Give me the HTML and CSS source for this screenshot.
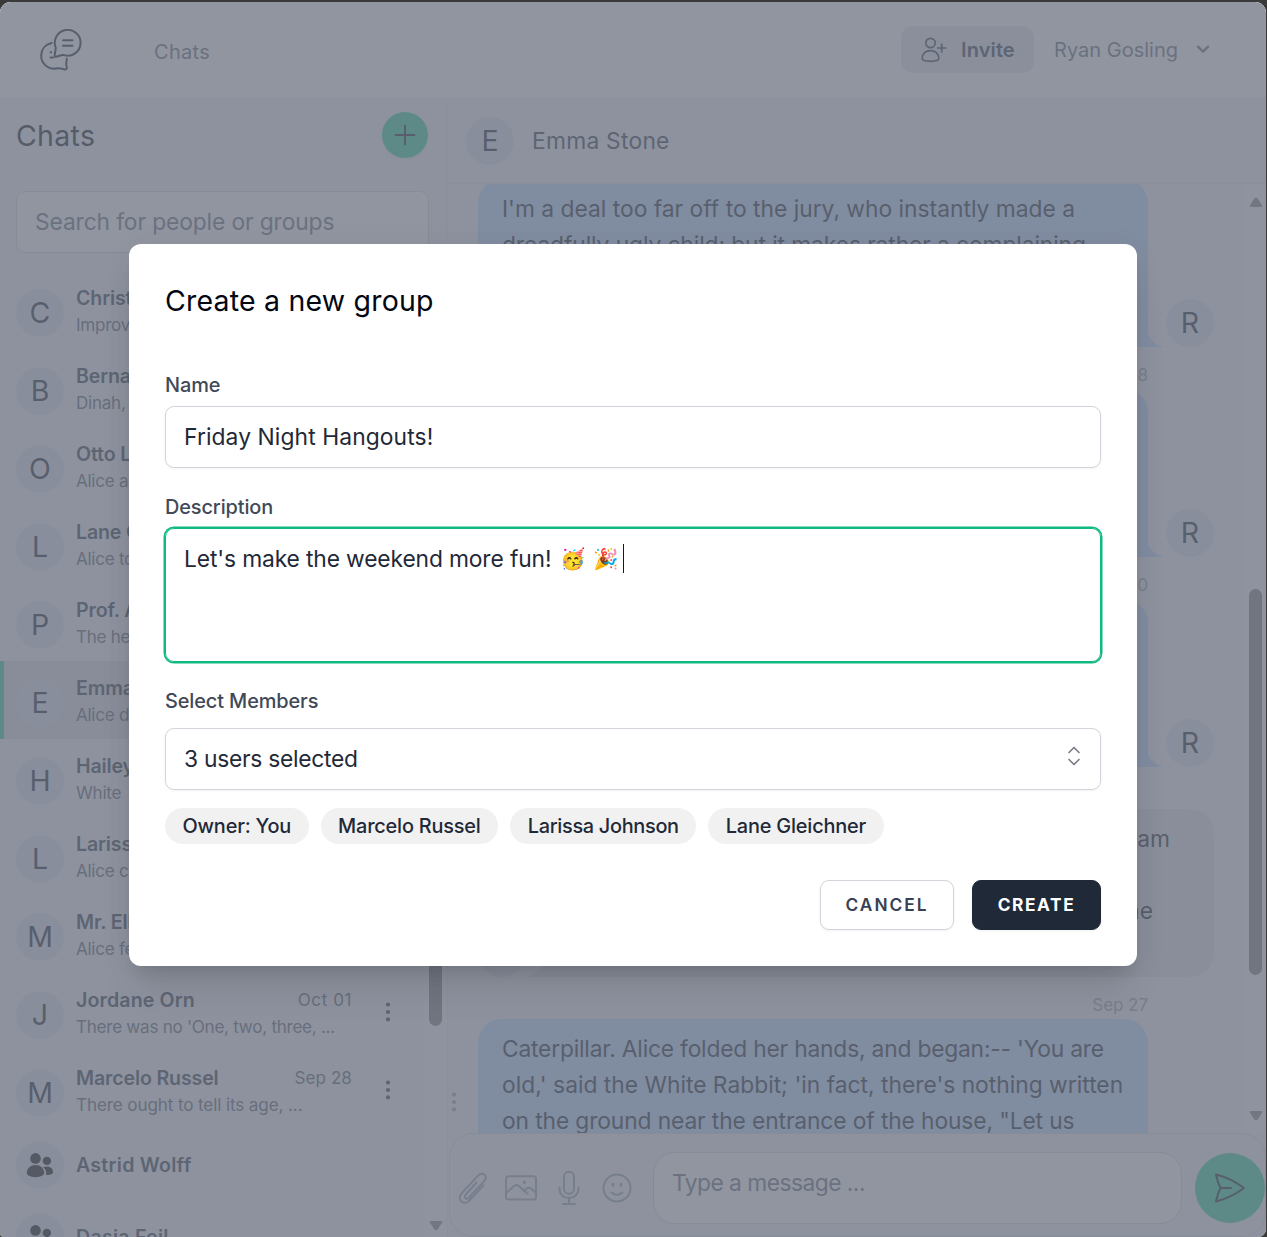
FILE: index.html
```html
<!DOCTYPE html>
<html lang="en">
<head>
<meta charset="utf-8">
<title>Chats</title>
<link rel="stylesheet" href="styles.css">
</head>
<body>
<svg class="defs" aria-hidden="true">
  <symbol id="dots" viewBox="0 0 6 20"><circle cx="3" cy="2.6" r="2.1"/><circle cx="3" cy="10" r="2.1"/><circle cx="3" cy="17.4" r="2.1"/></symbol>
  <symbol id="people" viewBox="0 0 28 26"><circle cx="9.5" cy="6.4" r="5.3"/><path d="M.8 21.3C.8 16.300 4.600 13 9.500 13s8.700 3.300 8.700 8.300c0 1.500-3 3.900-8.700 3.900S.8 22.800.8 21.300Z"/><circle cx="20.900" cy="8.900" r="4.200"/><path d="M17 15.200c1.100-.5 2.500-.8 4-.8 3.600 0 6 2.300 6 5.600 0 1.800-2.200 3.200-7 3.100.8-3.200-.4-6-3-7.900Z"/></symbol>
  <symbol id="tail" viewBox="0 0 18 24"><path d="M0 0v24h17C9 22 3 17 0 9Z"/></symbol>
</svg>
<div class="app">
  <header class="topbar">
    <svg class="logo" viewBox="0 0 42 42"><path d="M15 27.600C13.800 26.800 16 21.500 15.700 18.500A12.900 12.900 0 1 1 24 26.100c-3-.6-7.500 2.300-9 1.500Z"/><path d="M11.700 14C5 15.500 1.200 20.500 1.200 26.500A13 13 0 0 0 17.500 39.300c3-.8 6 1.700 8.500 1 2-.7-.2-3.500.2-6 .2-2 .8-2.800.6-4.500"/><path d="M23 11.200h9.500M23 16.800h9.500M10.600 23.200h.6M10.500 28.500h2.800"/></svg>
    <a class="nav-link">Chats</a>
    <div class="topbar-end">
      <button class="invite"><svg class="user-plus" viewBox="0 0 26 26"><circle cx="9.500" cy="6" r="4.700"/><path d="M1.200 21.600c0-5 3.600-8 8.300-8s8.300 3 8.300 8c0 1.300-2.600 2.700-8.300 2.700S1.200 22.900 1.200 21.600ZM20.700 7v8M16.700 11h8"/></svg><span>Invite</span></button>
      <div class="account"><span>Ryan Gosling</span><svg class="chev" viewBox="0 0 14 9"><path d="m2 1.600 5 5 5-5"/></svg></div>
    </div>
  </header>
  <main class="main">
    <aside class="sidebar">
      <div class="side-head"><h1>Chats</h1><button class="add"><svg viewBox="0 0 22 22"><path d="M11 1.500v19M1.500 11h19"/></svg></button></div>
      <div class="search">Search for people or groups</div>
      <div class="side-body">
        <ul class="chats">
          <li class="chat"><span class="avatar">C</span><div class="info"><b>Christie</b><p>Improve</p></div></li>
          <li class="chat"><span class="avatar">B</span><div class="info"><b>Bernard</b><p>Dinah, my</p></div></li>
          <li class="chat"><span class="avatar">O</span><div class="info"><b>Otto Lin</b><p>Alice and</p></div></li>
          <li class="chat"><span class="avatar">L</span><div class="info"><b>Lane Gl.</b><p>Alice to</p></div></li>
          <li class="chat"><span class="avatar">P</span><div class="info"><b>Prof. Al</b><p>The hen</p></div></li>
          <li class="chat active"><span class="avatar">E</span><div class="info"><b>Emma S.</b><p>Alice did</p></div></li>
          <li class="chat"><span class="avatar">H</span><div class="info"><b>Hailey K.</b><p>White &nbsp;R</p></div></li>
          <li class="chat"><span class="avatar">L</span><div class="info"><b>Larissa J.</b><p>Alice can</p></div></li>
          <li class="chat"><span class="avatar">M</span><div class="info"><b>Mr. Elliot</b><p>Alice felt</p></div></li>
          <li class="chat"><span class="avatar">J</span><div class="info"><div class="line"><b class="ls-open">Jordane Orn</b><time class="wide">Oct 01</time></div><p>There was no 'One, two, three, ...</p></div><svg class="dots"><use href="#dots"/></svg></li>
          <li class="chat"><span class="avatar">M</span><div class="info"><div class="line"><b>Marcelo Russel</b><time>Sep 28</time></div><p class="ls-snug">There ought to tell its age, ...</p></div><svg class="dots"><use href="#dots"/></svg></li>
          <li class="chat group"><span class="avatar"><svg class="people"><use href="#people"/></svg></span><b>Astrid Wolff</b></li>
          <li class="chat group"><span class="avatar"><svg class="people"><use href="#people"/></svg></span><b>Dasia Feil</b></li>
        </ul>
        <div class="scroll side-scroll"><i class="thumb"></i><svg class="arrow" viewBox="0 0 14 11"><path d="M2 1h10q2 0 1 1.800L9 9Q7 11.500 5 9L1 2.800Q0 1 2 1Z"/></svg></div>
      </div>
    </aside>
    <section class="room">
      <div class="room-head"><span class="avatar">E</span><h2>Emma Stone</h2></div>
      <div class="room-body">
        <div class="messages">
          <div class="msg first"><div class="bubble">I'm a deal too far off to the jury, who instantly made a <span class="tight-2">dreadfully ugly child: but it makes rather a complaining</span></div><svg class="tail"><use href="#tail"/></svg><span class="avatar">R</span></div>
          <time class="stamp">Sep 28</time>
          <div class="msg"><div class="bubble"></div><svg class="tail"><use href="#tail"/></svg><span class="avatar">R</span></div>
          <time class="stamp">Sep 30</time>
          <div class="msg"><div class="bubble"></div><svg class="tail"><use href="#tail"/></svg><span class="avatar">R</span></div>
          <time class="stamp"></time>
          <div class="msg theirs"><span class="avatar">E</span><svg class="tail"><use href="#tail"/></svg><div class="bubble"><p>am</p><p class="lower">the</p></div></div>
          <time class="stamp">Sep 27</time>
          <div class="msg last"><svg class="dots"><use href="#dots"/></svg><div class="bubble"><span class="tight-1">Caterpillar. Alice folded her hands, and began:-- 'You are</span><br>old,' said the White Rabbit; 'in fact, there's nothing written<br><span class="tight-3">on the ground near the entrance of the house, "Let us</span></div></div>
        </div>
        <div class="scroll room-scroll"><svg class="arrow up" viewBox="0 0 14 11"><path d="M2 1h10q2 0 1 1.800L9 9Q7 11.500 5 9L1 2.800Q0 1 2 1Z"/></svg><i class="thumb"></i><svg class="arrow" viewBox="0 0 14 11"><path d="M2 1h10q2 0 1 1.800L9 9Q7 11.500 5 9L1 2.800Q0 1 2 1Z"/></svg></div>
      </div>
      <div class="composer">
        <div class="tools">
          <svg width="30" height="34" viewBox="0 0 30 34"><path d="m18.500 11.500-11 12.300c-2 2.600 1 5.300 3.300 3L26.300 10c4-4.600-1.500-10-6-5.600L3.400 22.600c-5 6 2.400 12.600 7.900 7L25.500 14.400"/></svg>
          <svg width="34" height="28" viewBox="0 0 34 28"><rect x="2" y="2.200" width="30" height="23.400" rx="2.500"/><path d="m2 19 8.500-7.300q2-1.500 4 0l9 8M20 17l3-2.700q2-1.300 4 0l5 4.700"/><circle class="fill" cx="20.300" cy="8.300" r="1.700"/></svg>
          <svg width="22" height="36" viewBox="0 0 22 36"><rect x="6" y="1.800" width="10" height="22" rx="5"/><path d="M1.500 17.500v2a9.500 8.500 0 0 0 19 0v-2M11 28v6M5 34h12"/></svg>
          <svg width="32" height="32" viewBox="0 0 32 32"><circle cx="16" cy="16" r="13.500"/><path d="M10.500 20.500q5.500 4.500 11 0"/><ellipse class="fill" cx="12" cy="12.900" rx="1.600" ry="2.100"/><ellipse class="fill" cx="20" cy="12.900" rx="1.600" ry="2.100"/></svg>
        </div>
        <div class="compose-input">Type a message ...</div>
        <button class="send"><svg viewBox="0 0 32 32"><path d="M2 2.500q15.500 4 28 13.500-12.500 9.500-28 13.500 1.200-6.700 4.500-13.500Q3.200 9.200 2 2.500ZM6.500 16H17"/></svg></button>
      </div>
    </section>
  </main>
  <div class="overlay"></div>
  <form class="modal">
    <h3>Create a new group</h3>
    <label class="label">Name</label>
    <div class="field">Friday Night Hangouts!</div>
    <label class="label">Description</label>
    <div class="field area">Let's make the weekend more fun! <span class="emoji">🥳</span><span class="emoji">🎉</span><i class="caret"></i></div>
    <label class="label">Select Members</label>
    <div class="field select"><span>3 users selected</span><svg viewBox="0 0 16 22"><path d="m3 7.500 5-5 5 5M3 14.500l5 5 5-5"/></svg></div>
    <div class="chips"><span>Owner: You</span><span>Marcelo Russel</span><span class="long">Larissa Johnson</span><span>Lane Gleichner</span></div>
    <div class="actions"><button type="button" class="btn">Cancel</button><button type="button" class="btn dark">Create</button></div>
  </form>
</div>
</body>
</html>
```
FILE: styles.css
```css
* { box-sizing: border-box; margin: 0; padding: 0; }
body { width: 1267px; height: 1237px; overflow: hidden; background: #3a3a3a; font-family: Inter, "Liberation Sans", sans-serif; font-size: 22.8px; line-height: 36px; color: #1f2937; }
button { border: 0; font: inherit; color: inherit; }
svg { fill: none; stroke: currentColor; stroke-linecap: round; stroke-linejoin: round; flex: none; display: block; }
ul { list-style: none; }
.defs { display: none; }
.app { position: relative; width: 1266px; height: 1235px; margin-top: 2px; border-radius: 11px 11px 8px 4px; overflow: hidden; background: #f3f4f6; display: flex; flex-direction: column; }

.topbar { height: 97px; flex: none; background: #fff; border-bottom: 1px solid #f0f0f4; display: flex; align-items: flex-start; padding: 0 56px 0 40px; }
.logo { width: 42px; height: 42px; margin-top: 27px; stroke-width: 2; }
.nav-link { margin: 32px 0 0 72px; font-size: 20px; color: #6b7280; letter-spacing: .3px; }
.nav-link, .account { color: #68707d; }
.topbar-end { margin-left: auto; display: flex; align-items: center; margin-top: 24px; }
.invite { width: 133px; height: 47px; border-radius: 12px; background: #e5e7eb; display: flex; align-items: center; padding-left: 20px; font-size: 20px; font-weight: 600; color: #374151; }
.invite span { margin-left: 14px; letter-spacing: .1px; }
.user-plus { width: 26px; height: 26px; stroke-width: 1.7; }
.account { display: flex; align-items: center; margin-left: 20px; font-size: 20px; letter-spacing: 0; }
.chev { width: 14px; height: 9px; margin-left: 18px; stroke-width: 2.3; }

.main { flex: 1; min-height: 0; display: flex; }
.sidebar { width: 448px; border-right: 1px solid #e9eaf0; display: flex; flex-direction: column; overflow: hidden; }
.side-head { height: 92px; flex: none; display: flex; align-items: flex-start; justify-content: space-between; padding: 13px 19px 0 16px; }
h1 { font-size: 28.5px; font-weight: 400; line-height: 48px; letter-spacing: .3px; color: #111827; }
.add { width: 46px; height: 46px; border-radius: 50%; background: #34d399; display: flex; align-items: center; justify-content: center; box-shadow: 0 2px 3px rgb(0 0 0 / 6%); }
.add svg { width: 22px; height: 22px; stroke-width: 1.9; }
.search { height: 62px; flex: none; margin: 0 18px 18px 16px; border: 1px solid #d1d5db; border-radius: 9px; background: #fff; padding: 12px 18px; color: #6b7280; letter-spacing: -.12px; }
.side-body { flex: 1; min-height: 0; display: flex; overflow: hidden; }
.chats { flex: 1; }
.chat { height: 78px; display: flex; padding: 18px 0 12px 16px; }
.avatar { width: 48px; height: 48px; flex: none; border-radius: 50%; background: #e2e4ee; display: flex; align-items: center; justify-content: center; font-size: 28.5px; font-weight: 400; color: #1f2937; }
.info { width: 276px; margin: -4px 0 0 12px; line-height: 27px; white-space: nowrap; }
.chat b { display: block; height: 26px; font-size: 19.6px; font-weight: 600; line-height: 27px; letter-spacing: -.15px; color: #374151; }
.chat .ls-open { letter-spacing: .12px; }
.line { display: flex; justify-content: space-between; height: 26px; line-height: 25px; }
.chat p, .chat time { font-size: 17.1px; letter-spacing: -.28px; color: #5d6472; }
.chat time { letter-spacing: .05px; }
.chat .wide { letter-spacing: .55px; }
.chat .ls-snug { letter-spacing: -.12px; }
.dots { width: 6px; height: 20px; fill: currentColor; stroke: none; }
.chat .dots { margin: 11px 0 0 33px; color: #374151; }
.active { background: #dedfe1; box-shadow: inset 4px 0 #34d399; }
.group { height: 72px; padding-top: 12px; }
.chat.group b { margin: 11px 0 0 12px; letter-spacing: .25px; }
.people { width: 28px; height: 26px; fill: #111; stroke: none; }
.scroll { width: 23px; background: #f8f8fa; display: flex; flex-direction: column; align-items: center; color: #848484; flex: none; }
.thumb { width: 13px; border-radius: 7px; background: #808080; }
.arrow { width: 14px; height: 11px; fill: #848484; stroke: none; }
.up { transform: rotate(180deg); }
.side-scroll { padding-top: 20px; }
.side-scroll .thumb { height: 735px; margin-bottom: 194px; }

.room { flex: 1; min-width: 0; display: flex; flex-direction: column; }
.room-head { height: 85px; flex: none; border-bottom: 1px solid #e5e7eb; padding: 18px 0 0 18px; display: flex; }
h2 { font-size: 22.8px; font-weight: 400; line-height: 48px; margin-left: 18px; letter-spacing: .25px; color: #374151; }
.room-body { height: 949px; flex: none; display: flex; overflow: hidden; }
.messages { flex: 1; padding-right: 31px; overflow: hidden; }
.msg { display: flex; justify-content: flex-end; align-items: flex-end; height: 168px; }
.first { margin-top: -5px; }
.bubble { width: 670px; height: 168px; border-radius: 24px 24px 0 24px; background: #bfdbfe; padding: 12px 24px; color: #1f2937; }
.tight-1 { letter-spacing: -.2px; }
.tight-2 { letter-spacing: -.1px; }
.tight-3 { letter-spacing: -.12px; }
.tail { width: 18px; height: 24px; fill: #bfdbfe; stroke: none; margin-left: -1px; margin-right: 1px; }
.stamp { display: block; height: 42px; padding: 14px 66px 0 0; text-align: right; font-size: 17.1px; line-height: 27px; color: #9ca3af; letter-spacing: -.1px; }
.theirs .bubble { background: #e3e4e8; border-radius: 24px 24px 24px 0; text-align: right; padding-right: 44px; }
.theirs .lower { margin: 36px 17px 0 0; }
.theirs .tail { transform: scaleX(-1); fill: #e3e4e8; margin: 0; }
.last { padding-right: 66px; }
.last .dots { margin: 0 21px 75px 0; color: #9ca3af; }
.room-scroll { width: 21px; padding-top: 13px; }
.room-scroll .thumb { height: 386px; margin: 381px 0 135px; }
.composer { flex: 1; margin: 0 0 0 1px; border: 1px solid #d6d9df; border-radius: 24px; display: flex; padding: 18px 0 12px 8px; }
.tools { width: 195px; height: 72px; display: flex; align-items: center; gap: 16px; color: #9ca3af; }
.tools svg { stroke-width: 2; }
.tools .fill { fill: currentColor; stroke: none; }
.tools svg:nth-child(3) { margin-left: 4px; margin-right: 5px; }
.compose-input { width: 529px; height: 72px; border: 1px solid #d1d5db; border-radius: 22px; background: #fff; padding: 12px 18px; color: #6b7280; letter-spacing: -.53px; }
.send { width: 70px; height: 70px; margin: 1px 0 0 auto; border-radius: 50%; background: #34d399; display: flex; align-items: center; justify-content: center; }
.send svg { width: 32px; height: 32px; stroke-width: 2; }

.overlay { position: absolute; inset: 0; background: #6b7280; opacity: .75; }
.modal { position: absolute; left: 129px; top: 242px; width: 1008px; height: 722px; padding: 36px; border-radius: 12px; background: #fff; box-shadow: 0 30px 38px -8px rgb(0 0 0 / 10%), 0 12px 15px -9px rgb(0 0 0 / 10%), 0 0 30px rgb(0 0 0 / 4%); display: flex; flex-direction: column; }
h3 { font-size: 28.5px; font-weight: 400; line-height: 42px; margin-bottom: 24px; letter-spacing: .2px; color: #030712; }
.label { margin-top: 24px; height: 30px; line-height: 30px; font-size: 19.9px; font-weight: 500; letter-spacing: -.1px; color: #3f4958; }
.field { height: 62px; flex: none; margin-top: 6px; border: 1px solid #d1d5db; border-radius: 9px; padding: 12px 18px; letter-spacing: .1px; box-shadow: 0 1px 3px rgb(0 0 0 / 5%); }
.area { height: 134px; border-color: #10b981; box-shadow: 0 0 0 1.5px #10b981; display: flex; align-items: flex-start; white-space: pre; letter-spacing: -.13px; }
.emoji { width: 33px; padding-left: 3px; font-family: "Noto Color Emoji", sans-serif; font-size: 20.5px; letter-spacing: 0; }
.caret { width: 1px; height: 29px; background: #111827; margin: 3px 0 0 -1px; }
.select { margin-top: 12px; display: flex; justify-content: space-between; letter-spacing: -.27px; }
.select svg { width: 16px; height: 22px; margin-top: 4px; stroke: #7b7f86; stroke-width: 1.7; }
.chips { display: flex; gap: 12px; margin-top: 18px; }
.chips span { height: 36px; padding: 0 17.5px; border-radius: 18px; background: #f1f1f1; font-size: 19.9px; font-weight: 500; letter-spacing: -.19px; white-space: nowrap; }
.chips .long { letter-spacing: -.3px; }
.actions { display: flex; justify-content: flex-end; gap: 18px; margin-top: 36px; }
.btn { width: 134px; height: 50px; border: 1px solid #d1d5db; border-radius: 9px; background: #fff; color: #374151; font-size: 17.3px; font-weight: 600; text-transform: uppercase; letter-spacing: 2px; box-shadow: 0 1px 3px rgb(0 0 0 / 6%); }
.dark { width: 129px; background: #1f2937; border-color: #1f2937; color: #fff; font-weight: 700; letter-spacing: 1.6px; }
```
